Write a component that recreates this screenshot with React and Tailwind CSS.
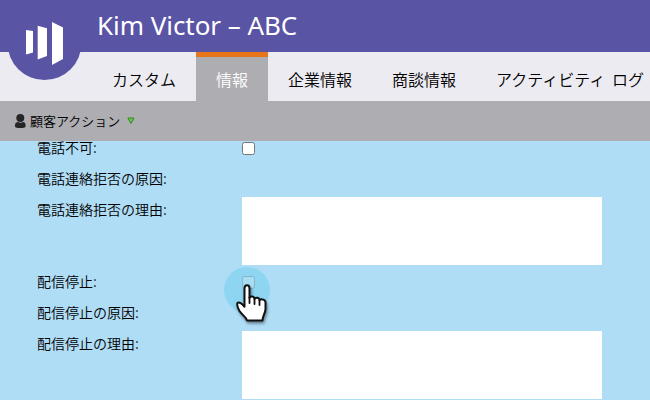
const TABS = [
  { label: 'カスタム' },
  { label: '情報', active: true },
  { label: '企業情報' },
  { label: '商談情報' },
  { label: 'アクティビティ ログ' },
];

const FIELDS = [
  { label: '電話不可:', type: 'checkbox', first: true },
  { label: '電話連絡拒否の原因:', type: 'empty' },
  { label: '電話連絡拒否の理由:', type: 'textarea' },
  { label: '配信停止:', type: 'checkbox', pointed: true },
  { label: '配信停止の原因:', type: 'empty' },
  { label: '配信停止の理由:', type: 'textarea' },
];

function Logo() {
  return (
    <svg className="absolute left-0 top-0" width="90" height="82" viewBox="0 0 90 82">
      <circle cx="44.500" cy="43" r="37" fill="#5a54a4" />
      <path d="M26 30l7 1v21.500l-7 2z" fill="#fff" />
      <path d="M37.700 25.700l9.300 2.600v27.700l-9.300 3.600z" fill="#fff" />
      <path d="M52 22l11 5.500v31.500l-11 6z" fill="#fff" />
    </svg>
  );
}

function Pointer() {
  return (
    <svg className="absolute -left-[18px] -top-[9px]" width="60" height="62" viewBox="0 0 60 62">
      <circle cx="23" cy="23" r="23" fill="#6ccdec" fillOpacity="0.5" />
      <rect x="18.500" y="9.500" width="12" height="12" rx="2" fill="#a9def2" stroke="#86b4c8" />
      <path
        d="M20.500 21.500c0-4.500 5-4.500 5 0v9.500c1-2.500 5-2 5 1 1.500-2.200 5-1.500 5 1.200 2-1.700 6-.7 6 2.300v6.500c0 4-3 7-3 11.500H23c-1-4-5.500-6-7.500-9.500-1.200-2.500-3.200-6-2-8 1.500-1.600 4.500.8 7 3.800z"
        fill="#fff"
        stroke="#111"
        strokeWidth="2"
        strokeLinejoin="round"
        className="drop-shadow-[1px_2px_1.500px_rgba(0,0,0,0.45)]"
      />
      <path d="M25.500 30.500v5.500M30.500 32v5M35.500 33.500v4.500" stroke="#111" strokeWidth="1.800" strokeLinecap="round" />
    </svg>
  );
}

function Checkbox({ pointed, first }) {
  return (
    <div className={`relative size-[13px] ${first ? 'mt-px' : 'mt-[7px]'}`}>
      {pointed ? (
        <Pointer />
      ) : (
        <div className="size-[13px] rounded-[2.500px] border border-[#767676] bg-white" />
      )}
    </div>
  );
}

function Field({ label, type, pointed, first }) {
  const height = first ? 'h-[25px]' : type === 'textarea' ? 'h-[72px]' : 'h-[31px]';
  return (
    <div className={`flex shrink-0 ${height}`}>
      <div className={`w-[205px] text-sm ${first ? 'leading-[12px]' : 'leading-[24px]'}`}>{label}</div>
      {type === 'checkbox' && <Checkbox pointed={pointed} first={first} />}
      {type === 'textarea' && <div className="h-[68px] w-[360px] bg-white" />}
    </div>
  );
}

export default function App() {
  return (
    <div className="relative flex h-[400px] w-[650px] flex-col overflow-hidden bg-[#b0ddf6] font-['Noto_Sans_CJK_JP',sans-serif] font-[350] text-black">
      <header className="h-[52px] shrink-0 bg-[#5a54a4] pl-[97px] font-['Noto_Sans',sans-serif] text-[26px] font-normal leading-[50px] tracking-[-0.05px] text-white">
        <h1 className="whitespace-nowrap">Kim Victor – ABC</h1>
      </header>
      <nav className="flex h-[49px] shrink-0 bg-[#ecebf1] pl-[92px]">
        {TABS.map((t) => (
          <div
            key={t.label}
            className={`shrink-0 whitespace-nowrap border-t-5 px-5 text-base leading-[44px] [word-spacing:3px] ${
              t.active ? 'border-[#e87518] bg-[#aeadb2] text-white' : 'border-transparent'
            }`}
          >
            {t.label}
          </div>
        ))}
      </nav>
      <div className="flex h-10 shrink-0 items-center bg-[#aeadb2] pl-[15px]">
        <svg width="11" height="14" viewBox="0 0 11 14" className="mr-1" fill="#252525">
          <circle cx="5.300" cy="4" r="4" />
          <path d="M0 11c0-2 1.500-3 3-3 1.500 1 3.500 1 5 0 1.500 0 2.600 1 2.600 3v1.500c0 2-10.600 2-10.600 0z" />
        </svg>
        <span className="text-[13px] leading-10">顧客アクション</span>
        <svg width="8" height="8" viewBox="0 0 8 8" className="ml-[7px]">
          <path d="M.8 1h6.200L4 6.500z" fill="#65c63f" stroke="#348a2b" strokeWidth="1" strokeLinejoin="round" />
        </svg>
      </div>
      <main className="flex min-h-0 flex-1 flex-col pl-[37px]">
        {FIELDS.map((f) => (
          <Field key={f.label} {...f} />
        ))}
      </main>
      <Logo />
    </div>
  );
}
